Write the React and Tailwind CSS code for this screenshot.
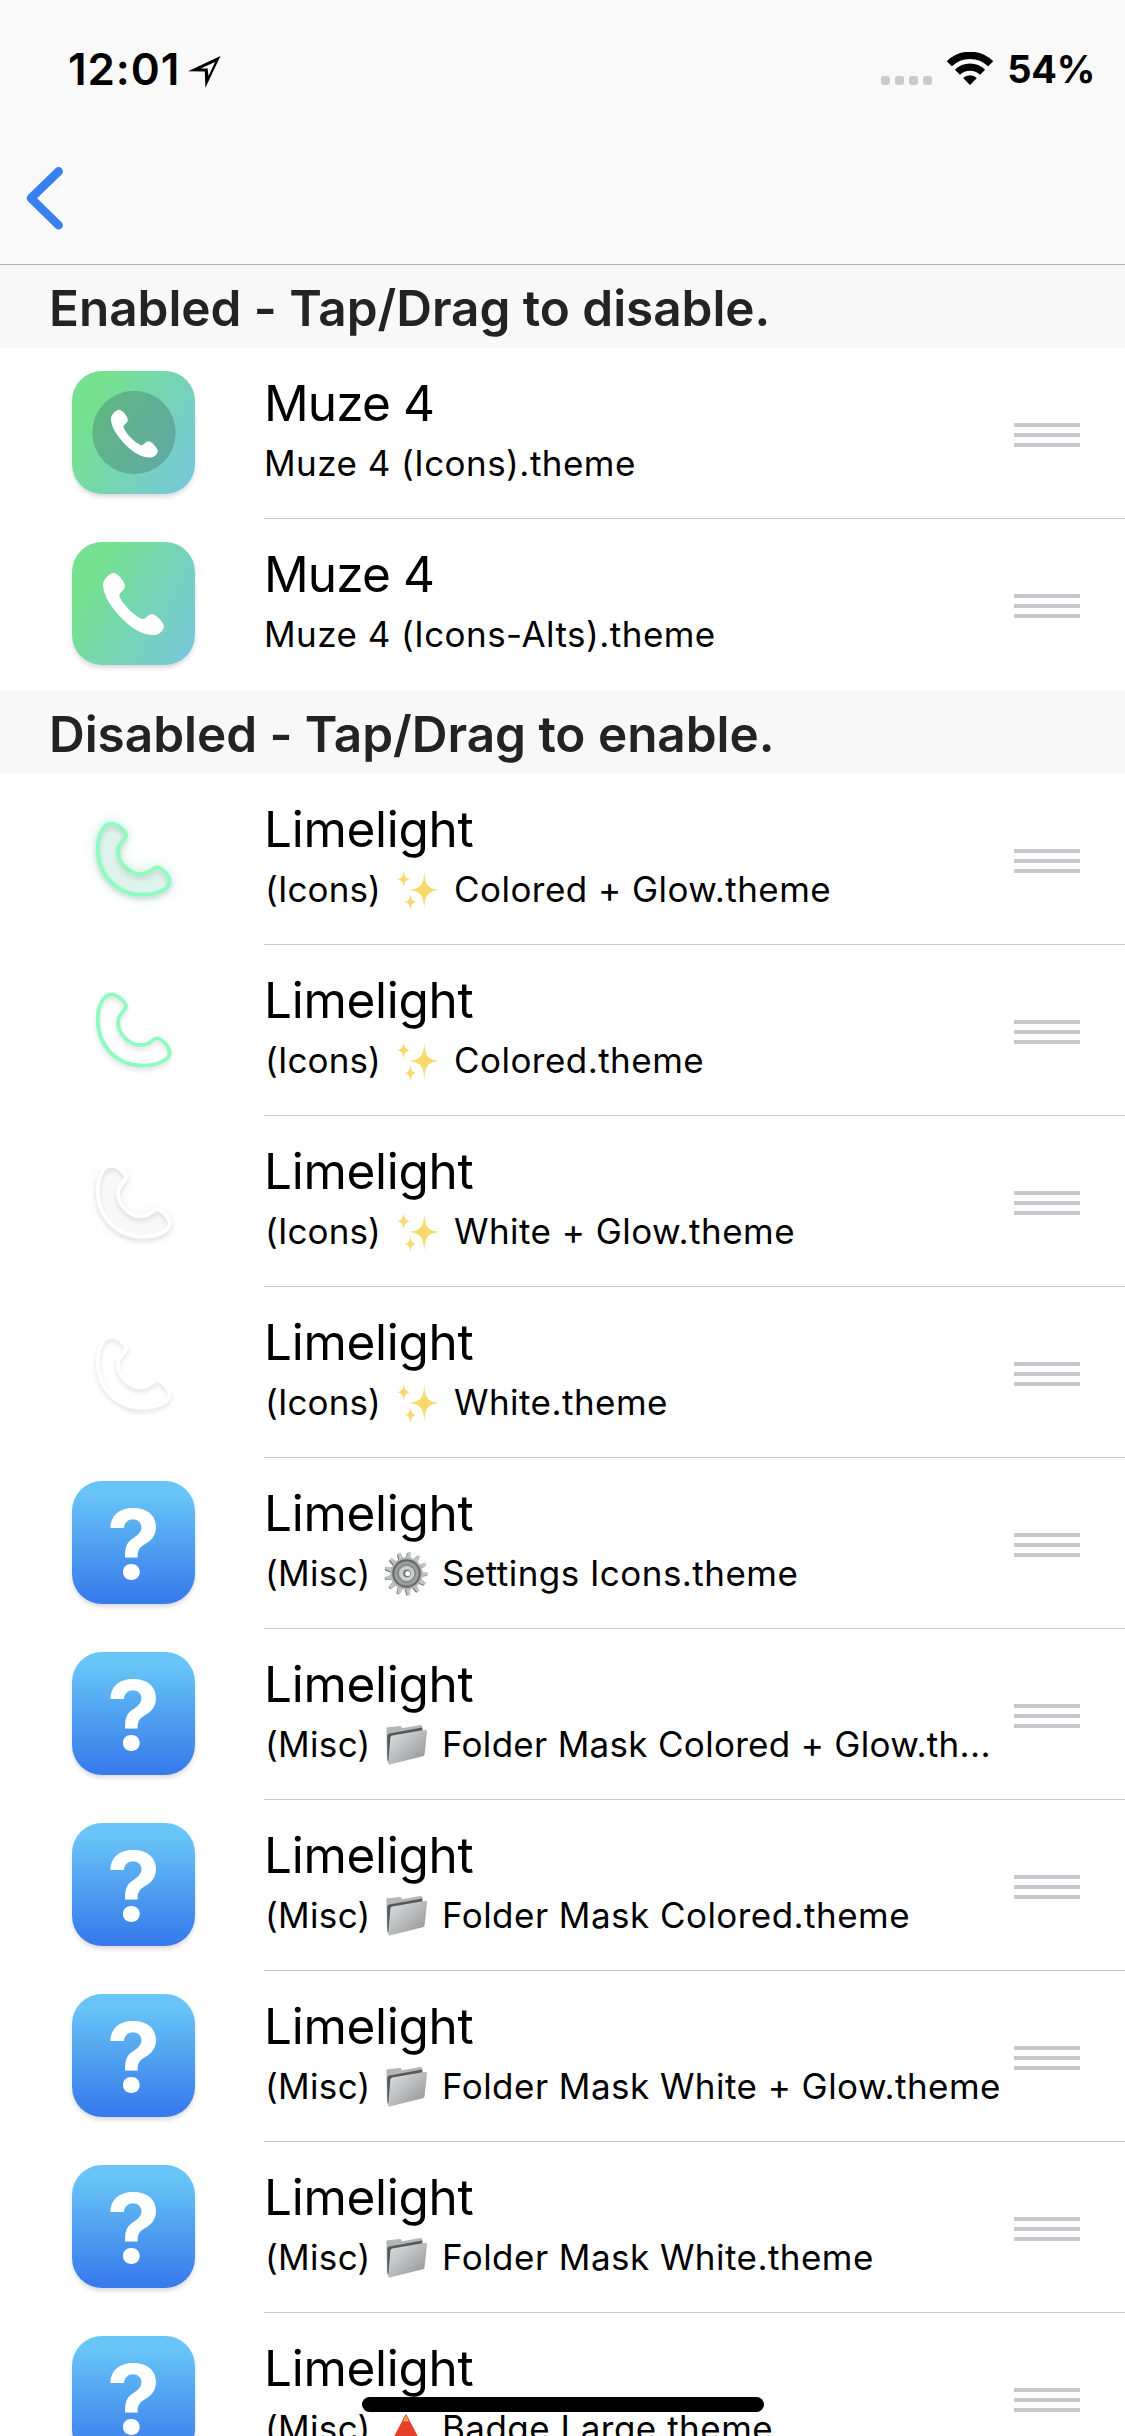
const enabledThemes = [
  { title: "Muze 4", file: "Muze 4 (Icons).theme", icon: "muze-circle" },
  { title: "Muze 4", file: "Muze 4 (Icons-Alts).theme", icon: "muze" },
];

const disabledThemes = [
  { title: "Limelight", group: "(Icons)", emoji: "sparkles", file: "Colored + Glow.theme", icon: "green-glow" },
  { title: "Limelight", group: "(Icons)", emoji: "sparkles", file: "Colored.theme", icon: "green" },
  { title: "Limelight", group: "(Icons)", emoji: "sparkles", file: "White + Glow.theme", icon: "white-glow" },
  { title: "Limelight", group: "(Icons)", emoji: "sparkles", file: "White.theme", icon: "white" },
  { title: "Limelight", group: "(Misc)", emoji: "gear", file: "Settings Icons.theme", icon: "unknown" },
  { title: "Limelight", group: "(Misc)", emoji: "folder", file: "Folder Mask Colored + Glow.th...", icon: "unknown" },
  { title: "Limelight", group: "(Misc)", emoji: "folder", file: "Folder Mask Colored.theme", icon: "unknown" },
  { title: "Limelight", group: "(Misc)", emoji: "folder", file: "Folder Mask White + Glow.theme", icon: "unknown" },
  { title: "Limelight", group: "(Misc)", emoji: "folder", file: "Folder Mask White.theme", icon: "unknown" },
  { title: "Limelight", group: "(Misc)", emoji: "triangle", file: "Badge Large.theme", icon: "unknown" },
];

/* ---------- Emoji drawings ---------- */
function Sparkles() {
  return (
    <svg viewBox="0 0 45 45" className="size-[45px]" fill="#f9d96d">
      <path d="M28.3 4C29 17 31 21.5 43 22.9C31 24.3 29 29 28.3 42.5C27.6 29 25.6 24.3 13 22.9C25.6 21.5 27.6 17 28.3 4Z" />
      <path d="M7.7 3.6C8.2 9 9.5 11.4 14 12.2C9.5 13 8.2 15.4 7.7 21C7.2 15.4 5.9 13 1.2 12.2C5.9 11.4 7.2 9 7.7 3.6Z" />
      <path d="M14.5 27C15 32 16.2 34.3 20.8 35C16.2 35.7 15 38 14.5 43.5C14 38 12.8 35.7 8.2 35C12.8 34.3 14 32 14.5 27Z" />
    </svg>
  );
}

function Gear() {
  const teeth = Array.from({ length: 13 }, (_, i) => (i * 360) / 13);
  return (
    <svg viewBox="0 0 45 45" className="size-[45px]">
      <g fill="#6f6f71" transform="translate(-0.9 0.7)">
        {teeth.map((a) => (
          <path key={a} d="M20 9L21 1.2H24L25 9Z" transform={`rotate(${a + 8} 22.5 22.5)`} />
        ))}
      </g>
      <g fill="#c3c4c6">
        {teeth.map((a) => (
          <path key={a} d="M20 9L21.1 0.8H23.9L25 9Z" transform={`rotate(${a + 8} 22.5 22.5)`} />
        ))}
      </g>
      <circle cx="22.5" cy="22.5" r="16.2" fill="#b4b5b7" />
      <circle cx="22.5" cy="22.5" r="13.4" fill="#8b8c8e" stroke="#626365" strokeWidth="1.6" />
      <circle cx="22.5" cy="22.5" r="10.6" fill="none" stroke="#a4a5a7" strokeWidth="1.4" />
      <circle cx="22.7" cy="22.5" r="7.6" fill="#cdced0" />
      <circle cx="22.9" cy="22.3" r="3.9" fill="#77787a" />
      <circle cx="23.7" cy="22.6" r="2.5" fill="#ffffff" />
    </svg>
  );
}

function Folder() {
  return (
    <svg viewBox="0 0 45 45" className="size-[45px]">
      <defs>
        <linearGradient id="folderFront" x1="0" y1="0" x2="1" y2="1">
          <stop offset="0" stopColor="#e2e2e4" />
          <stop offset="0.5" stopColor="#b9babc" />
          <stop offset="1" stopColor="#8d8e90" />
        </linearGradient>
      </defs>
      <path d="M2.4 6.4Q2.4 5.4 3.4 5.2L16 4.1Q17.6 4 17.9 6.2L36.3 3Q38.2 2.8 38.3 5V12L5 40Q3 40 3 38Z" fill="#b5b6b8" />
      <path d="M3.2 14Q3.4 12 5.4 11.6L38.3 5.4V9L7 16L5 40Q3.4 39 3.4 37Z" fill="#58595b" />
      <path d="M6.4 15.8Q6.6 14 8.4 13.6L41.4 7.8Q43.2 7.6 43 9.4L40.6 32Q40.4 33.8 38.8 34.2L5.6 42.6Q4 42.8 4.2 41Z" fill="url(#folderFront)" />
    </svg>
  );
}

function Triangle() {
  return (
    <svg viewBox="0 0 45 45" className="size-[45px]">
      <path d="M21 9.6Q22 7.6 23 9.6L41 44H3Z" fill="#e3412b" />
      <path d="M22 11L23.8 14.6H20.2Z" fill="none" stroke="#f8c25a" strokeWidth="1.2" />
    </svg>
  );
}

const emojis = { sparkles: Sparkles, gear: Gear, folder: Folder, triangle: Triangle };

/* ---------- App icons ---------- */
const handset =
  "M31 42.5C31 38.5 37 31 41.5 31C46 31 53 40 53 44C53 48.5 47 50 47.4 54C50.5 62.5 64 75.5 70.5 77C74 77.4 76 72 80 72C84 72 92 81 92 84.5C92 88 87 93 83 93C72 93.5 61.5 88 51 77.5C39.5 66 31 53 31 42.5Z";

const tube =
  "M39.5 26.7C46 26.7 54 34.5 54 38.5C54 42.5 46 46.5 46 54C46 66 57 77.2 69 77.2C78.5 77.2 80 70.4 85 70.4C90 70.4 97.6 79 97.6 84.5C97.6 93 83 97.6 71 97.6C45 97.6 25.8 78 25.8 52C25.8 38 31 26.7 39.5 26.7Z";

function MuzeIcon({ circle }) {
  return (
    <div className="size-[123px] rounded-[30px] bg-linear-[120deg,#75e191_22%,#76d3b8_60%,#77c6dc_98%] shadow-[0_3px_4px_rgba(0,0,0,0.14)]">
      <svg viewBox="0 0 123 123" className="size-[123px]">
        {circle && <circle cx="62" cy="61.5" r="41.7" fill="#3c6b62" fillOpacity="0.36" />}
        <path d={handset} fill="#fff" transform={circle ? "translate(15.1 15) scale(0.768)" : undefined} />
      </svg>
    </div>
  );
}

function LimelightIcon({ white, glow }) {
  return (
    <svg viewBox="0 0 123 123" className="size-[123px] overflow-visible">
      {glow && (
        <path
          d={tube}
          className="blur-[6px]"
          fill={white ? "#f8f8f8" : "#c4ecdc"}
          stroke={white ? "#f8f8f8" : "#d3f3e6"}
          strokeWidth="7"
        />
      )}
      {glow && !white && <path d={tube} fill="#def3eb" />}
      <path
        d={tube}
        className="drop-shadow-[0_3px_2px_rgba(0,0,0,0.12)]"
        fill="none"
        stroke={white ? "#ffffff" : "#8dfcc1"}
        strokeWidth="3.8"
      />
    </svg>
  );
}

function UnknownIcon() {
  return (
    <div className="size-[123px] rounded-[30px] bg-linear-[180deg,#69c5f8_10%,#55a9f1_42%,#387cec_96%] pt-[1.5px] text-center text-[96px] leading-[123px] font-bold text-white shadow-[0_3px_4px_rgba(0,0,0,0.14)]">
      ?
    </div>
  );
}

function ThemeIcon({ name }) {
  if (name === "muze-circle") return <MuzeIcon circle />;
  if (name === "muze") return <MuzeIcon />;
  if (name === "unknown") return <UnknownIcon />;
  return <LimelightIcon white={name.startsWith("white")} glow={name.endsWith("glow")} />;
}

/* ---------- List ---------- */
function SectionHeader({ first, children }) {
  return (
    <h2
      className={`flex shrink-0 items-end bg-[#f8f8f8] pl-[49px] text-[49.5px] leading-[80px] font-semibold tracking-[-0.04px] text-[#232323] ${
        first ? "h-[83px]" : "h-[84px]"
      }`}
    >
      {children}
    </h2>
  );
}

function ThemeRow({ theme, last }) {
  const Emoji = emojis[theme.emoji];
  const isIcons = theme.group === "(Icons)";
  return (
    <li className="flex h-[171px]">
      <div className="w-[264px] shrink-0 pt-[23px] pl-[72px]">
        <ThemeIcon name={theme.icon} />
      </div>
      <div className={`flex flex-1 items-start pr-[45px] ${last ? "" : "border-b border-[#c8c8cc]"}`}>
        <div className="flex-1 pt-[25px] whitespace-nowrap">
          <div className={`text-[49.5px] leading-[60px] ${theme.group ? "tracking-[-0.29px]" : "tracking-[-0.87px]"}`}>
            {theme.title}
          </div>
          <div className="flex h-[60px] items-center text-[35px] leading-[60px] tracking-[0.46px]">
            {theme.group && (
              <>
                <span className={isIcons ? "w-[132px] pl-px tracking-[0.12px]" : "w-[120px] pl-px tracking-[0.33px]"}>
                  {theme.group}
                </span>
                <span className="mr-[13px] w-[45px]">
                  <Emoji />
                </span>
              </>
            )}
            <span className={theme.file.endsWith("...") ? "tracking-[0.3px]" : ""}>{theme.file}</span>
          </div>
        </div>
        <div className="mt-[75px] -ml-20 flex w-[66px] flex-col gap-[6px]">
          <div className="h-1 bg-[#c8c7cd]" />
          <div className="h-1 bg-[#c8c7cd]" />
          <div className="h-1 bg-[#c8c7cd]" />
        </div>
      </div>
    </li>
  );
}

function StatusBar() {
  return (
    <div className="flex h-[132px] items-start pr-[30px] pl-[68px]">
      <span className="mt-[39px] text-[44px] leading-[60px] font-semibold tracking-[0.9px]">12:01</span>
      <svg viewBox="0 0 33 32" className="mt-[56px] ml-[8px] h-8 w-[33px]">
        <path fillRule="evenodd" d="M32.5 0L0 15.2L16.8 15.6L17.4 31.8ZM27 6L20.6 20L19.6 12.6L12.6 12.4Z" />
      </svg>
      <div className="mt-[76px] ml-auto flex gap-[5px]">
        {[0, 1, 2, 3].map((i) => (
          <div key={i} className="size-[9px] rounded-[3px] bg-[#c9c9ce]" />
        ))}
      </div>
      <svg viewBox="0 0 46 33" className="mt-[52px] ml-[15px] h-[33px] w-[46px]" fill="none" stroke="#000" strokeWidth="7.2">
        <path d="M2.3 11.8A29.4 29.4 0 0 1 43.7 11.8" />
        <path d="M10.4 20.2A18 18 0 0 1 35.6 20.2" />
        <path d="M23 33L16.1 25.9A10 10 0 0 1 29.9 25.9Z" fill="#000" stroke="none" />
      </svg>
      <span className="mt-[39px] ml-[14px] text-[38px] leading-[60px] font-bold tracking-[-0.29px]">54%</span>
    </div>
  );
}

export default function App() {
  return (
    <div className="relative flex h-[2436px] w-[1125px] flex-col overflow-hidden bg-white font-['Inter',sans-serif] text-black">
      <header className="h-[265px] shrink-0 border-b border-[#b2b2b2] bg-[#f9f9f9]">
        <StatusBar />
        <svg viewBox="0 0 40 66" className="mt-[33px] ml-[25px] h-[66px] w-10">
          <path d="M33.6 6.4L6 33.2L33.6 60.2" fill="none" stroke="#3880ed" strokeWidth="8.6" strokeLinecap="round" strokeLinejoin="round" />
        </svg>
      </header>

      <SectionHeader first>Enabled - Tap/Drag to disable.</SectionHeader>
      <ul>
        {enabledThemes.map((theme, i) => (
          <ThemeRow key={i} theme={theme} last={i === enabledThemes.length - 1} />
        ))}
      </ul>

      <SectionHeader>Disabled - Tap/Drag to enable.</SectionHeader>
      <ul>
        {disabledThemes.map((theme, i) => (
          <ThemeRow key={i} theme={theme} last={i === disabledThemes.length - 1} />
        ))}
      </ul>

      {/* home indicator */}
      <div className="absolute top-[2397px] left-[362px] h-[15px] w-[402px] rounded-full bg-black" />
    </div>
  );
}
